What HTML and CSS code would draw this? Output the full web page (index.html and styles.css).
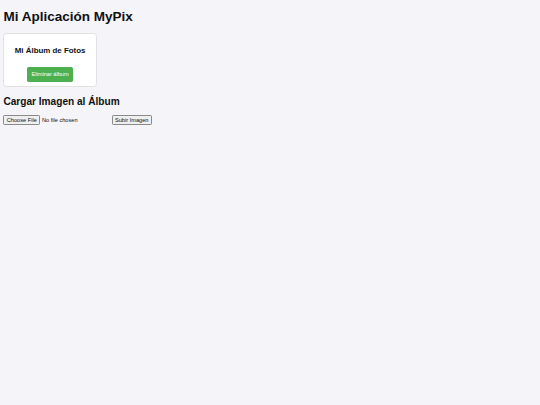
FILE: index.html
```html
<!DOCTYPE html>
<html lang="es">
<head>
<meta charset="utf-8">
<title>Mi Aplicación MyPix</title>
<link rel="stylesheet" href="styles.css">
</head>
<body>
<h1 class="app-title">Mi Aplicación MyPix</h1>
<div class="album">
  <h3 class="album-title">Mi Álbum de Fotos</h3>
  <button class="btn-delete" type="button">Eliminar álbum</button>
</div>
<h2 class="section-title">Cargar Imagen al Álbum</h2>
<form class="upload-form">
  <input type="file" class="file-input">
  <button type="button" class="btn-upload">Subir Imagen</button>
</form>
</body>
</html>
```

FILE: styles.css
```css
html {
  background: #f4f4f9;
}
body {
  margin: 3.4px;
  font-family: "Liberation Sans", Arial, sans-serif;
  font-size: 6.75px;
  color: #111;
  background: #f4f4f9;
}
.app-title {
  font-size: 13.5px;
  margin: 5.9px 0 9px;
}
.album {
  width: 83px;
  padding: 4.2px;
  border: 1px solid #e2e2e2;
  border-radius: 3.4px;
  background: #fff;
  text-align: center;
}
.album-title {
  font-size: 7.9px;
  margin: 7.9px 0;
}
.btn-delete {
  margin-top: 4px;
  padding: 4.2px;
  border: none;
  border-radius: 1.7px;
  background: #4caf50;
  color: #fff;
  font-family: "Liberation Sans", Arial, sans-serif;
  font-size: 5.63px;
  line-height: 6.5px;
}
.section-title {
  font-size: 10.125px;
  margin: 8.4px 0;
}
.upload-form {
  display: flex;
  align-items: center;
  gap: 2.2px;
  margin: 0;
}
.file-input {
  width: 106px;
  font-family: "Liberation Sans", Arial, sans-serif;
  font-size: 5.63px;
  color: #111;
}
.file-input::file-selector-button {
  margin-right: 1.7px;
  padding: 0.9px 2.4px;
  border: 1px solid #8a8a8a;
  border-radius: 1.2px;
  background: #efefef;
  color: #111;
  font-family: "Liberation Sans", Arial, sans-serif;
  font-size: 5.63px;
  line-height: 6.5px;
}
.btn-upload {
  padding: 0.9px 2.4px;
  border: 1px solid #8a8a8a;
  border-radius: 1.2px;
  background: #efefef;
  color: #111;
  font-family: "Liberation Sans", Arial, sans-serif;
  font-size: 5.63px;
  line-height: 6.5px;
}
```
